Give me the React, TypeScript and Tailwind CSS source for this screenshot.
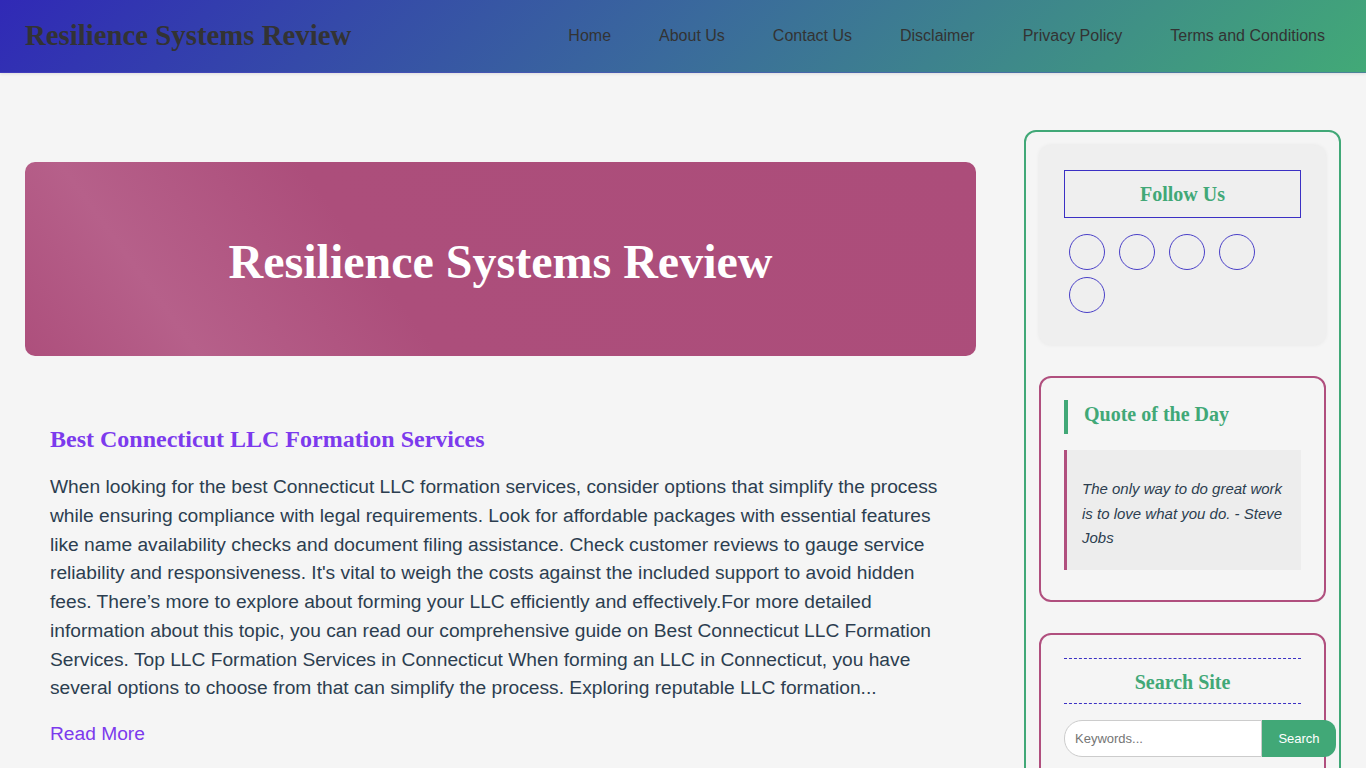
import React from "react";

const navLinks = ["Home", "About Us", "Contact Us", "Disclaimer", "Privacy Policy", "Terms and Conditions"];

const serif = "font-['Liberation_Serif','Times_New_Roman',serif]";
const sans = "font-['Liberation_Sans',Arial,sans-serif]";

function Header() {
  return (
    <header className="h-[73px] flex items-center justify-between pl-[25px] pr-[41px] bg-[linear-gradient(135deg,#3029b6_0%,#3a6a9c_50%,#42a977_100%)] border-b border-[#5a55c8]/40 shadow-[0_1px_3px_rgba(0,0,0,0.1)]">
      <div className={`${serif} font-bold text-[28.8px] text-[#333]`}>Resilience Systems Review</div>
      <nav className={`${sans} flex gap-12 text-[16px] text-[#333]`}>
        {navLinks.map((l) => (
          <a key={l} href="#" className="hover:text-white">
            {l}
          </a>
        ))}
      </nav>
    </header>
  );
}

function Hero() {
  return (
    <div className="mt-8 h-[194px] pt-[6px] rounded-[10px] flex items-center justify-center bg-[linear-gradient(54deg,#ad4f7c_0%,#b6608a_16%,#ac4e7b_38%,#ac4d7a_100%)]">
      <h1 className={`${serif} font-bold text-[48px] text-white`}>Resilience Systems Review</h1>
    </div>
  );
}

function Article() {
  return (
    <article className="mt-[69px] px-[25px]">
      <h2 className={`${serif} font-bold text-[24px] leading-[29px] text-[#7c3aed]`}>
        Best Connecticut LLC Formation Services
      </h2>
      <p className={`${sans} mt-[19px] text-[19.2px] leading-[28.75px] text-[#2c3e50]`}>
        When looking for the best Connecticut LLC formation services, consider options that simplify the process
        while ensuring compliance with legal requirements. Look for affordable packages with essential features like
        name availability checks and document filing assistance. Check customer reviews to gauge service reliability
        and responsiveness. It's vital to weigh the costs against the included support to avoid hidden fees. There’s
        more to explore about forming your LLC efficiently and effectively.For more detailed information about this
        topic, you can read our comprehensive guide on Best Connecticut LLC Formation Services. Top LLC Formation
        Services in Connecticut When forming an LLC in Connecticut, you have several options to choose from that can
        simplify the process. Exploring reputable LLC formation...
      </p>
      <a href="#" className={`${sans} block mt-[17px] text-[19.2px] leading-[28px] text-[#7c3aed]`}>
        Read More
      </a>
    </article>
  );
}

function FollowUs() {
  return (
    <div className="bg-[#efefef] rounded-[12px] p-[25px] pb-[32px] shadow-[0_0_4px_rgba(0,0,0,0.06)]">
      <div className="border border-[#3b30c4] h-[48px] flex items-center justify-center">
        <h3 className={`${serif} font-bold text-[20px] text-[#41a877]`}>Follow Us</h3>
      </div>
      <div className="mt-[16px] pl-[5px] flex flex-wrap gap-x-[14px] gap-y-[7px]">
        {[0, 1, 2, 3, 4].map((i) => (
          <a key={i} href="#" className="w-[36px] h-[36px] rounded-full border border-[#4a40c8]" />
        ))}
      </div>
    </div>
  );
}

function Quote() {
  return (
    <div className="mt-[31px] border-2 border-[#b04f7e] rounded-[12px] px-[23px] pt-[22px] pb-[30px]">
      <h3
        className={`${serif} font-bold text-[20px] leading-[24px] pt-[2px] pb-[8px] text-[#41a877] border-l-4 border-[#41a877] pl-[16px]`}
      >
        Quote of the Day
      </h3>
      <blockquote className="mt-[16px] bg-[#ededed] border-l-[3px] border-[#b04f7e] px-[15px] pt-[27px] pb-[19px]">
        <p className={`${sans} italic text-[15px] leading-[24.7px] text-[#2c3e50]`}>
          The only way to do great work is to love what you do. - Steve Jobs
        </p>
      </blockquote>
    </div>
  );
}

function SearchBox() {
  return (
    <div className="mt-[31px] border-2 border-[#b04f7e] rounded-[12px] px-[23px] pt-[23px] pb-[30px]">
      <div className="border-y border-dashed border-[#3b30c4] pt-[11px] pb-[9px] text-center">
        <h3 className={`${serif} font-bold text-[20px] leading-[24px] text-[#41a877]`}>Search Site</h3>
      </div>
      <form className="mt-[16px] flex" onSubmit={(e) => e.preventDefault()}>
        <input
          type="text"
          placeholder="Keywords..."
          className={`${sans} w-[198px] shrink-0 h-[37px] px-[10px] text-[13px] bg-white border border-[#ccc] rounded-l-[18px] outline-none placeholder:text-[#757575]`}
        />
        <button
          type="submit"
          className={`${sans} w-[74px] shrink-0 h-[37px] bg-[#41a877] text-white text-[13px] rounded-r-[12px]`}
        >
          Search
        </button>
      </form>
    </div>
  );
}

export default function App() {
  return (
    <div className="min-h-screen bg-[#f5f5f5]">
      <Header />
      <div className="flex gap-12 px-[25px] pt-[57px]">
        <main className="flex-1 min-w-0">
          <Hero />
          <Article />
        </main>
        <aside className="w-[317px] shrink-0 self-start border-2 border-[#41a877] rounded-[12px] p-[13px]">
          <FollowUs />
          <Quote />
          <SearchBox />
        </aside>
      </div>
    </div>
  );
}
